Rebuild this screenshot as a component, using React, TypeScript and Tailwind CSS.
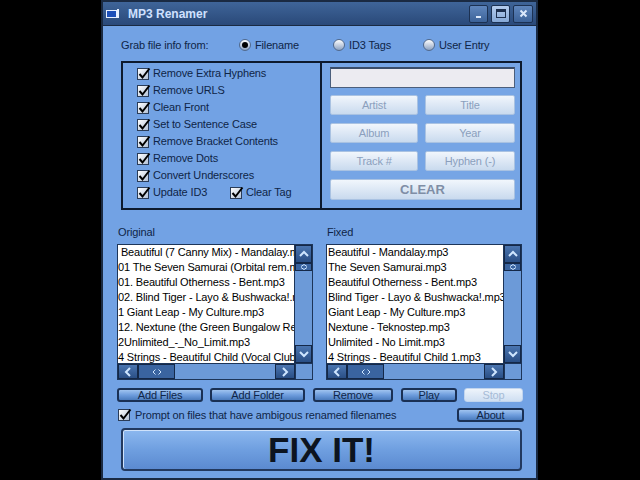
import React from "react";

const originals = [
  " Beautiful (7 Canny Mix) - Mandalay.mp3",
  "01 The Seven Samurai (Orbital rem.mp3",
  "01. Beautiful Otherness - Bent.mp3",
  "02. Blind Tiger - Layo & Bushwacka!.mp3",
  "1 Giant Leap - My Culture.mp3",
  "12. Nextune (the Green Bungalow Remix).mp3",
  "2Unlimited_-_No_Limit.mp3",
  "4 Strings - Beautiful Child (Vocal Club Mix).mp3",
];

const fixed = [
  "Beautiful - Mandalay.mp3",
  "The Seven Samurai.mp3",
  "Beautiful Otherness - Bent.mp3",
  "Blind Tiger - Layo & Bushwacka!.mp3",
  "Giant Leap - My Culture.mp3",
  "Nextune - Teknostep.mp3",
  "Unlimited - No Limit.mp3",
  "4 Strings - Beautiful Child 1.mp3",
];

const options = [
  "Remove Extra Hyphens",
  "Remove URLS",
  "Clean Front",
  "Set to Sentence Case",
  "Remove Bracket Contents",
  "Remove Dots",
  "Convert Underscores",
];

function Check() {
  return (
    <div className="relative w-[12px] h-[12px] shrink-0 border border-[#2a3c58] bg-gradient-to-br from-white to-[#b4c2d6]">
      <svg className="absolute -top-[2px] left-0" width="13" height="13" viewBox="0 0 13 13">
        <path d="M1.5 7 L4.5 10.5 L11.5 1.5" fill="none" stroke="#000" strokeWidth="2" />
      </svg>
    </div>
  );
}

function Radio({ on }: { on?: boolean }) {
  return (
    <div className="w-[12px] h-[12px] rounded-full shrink-0 border border-[#51698c] bg-gradient-to-b from-white to-[#8ea3c2] flex items-center justify-center">
      {on && <div className="w-[6px] h-[6px] rounded-full bg-black" />}
    </div>
  );
}

function Chevron({ dir }: { dir: "up" | "down" | "left" | "right" }) {
  const d = {
    up: "M2 8 L6 4 L10 8",
    down: "M2 4 L6 8 L10 4",
    left: "M8 2 L4 6 L8 10",
    right: "M4 2 L8 6 L4 10",
  }[dir];
  return (
    <svg width="12" height="12" viewBox="0 0 12 12">
      <path d={d} fill="none" stroke="#cfe6ff" strokeWidth="2" />
    </svg>
  );
}

function ScrollBtn({ dir, className }: { dir: "up" | "down" | "left" | "right"; className: string }) {
  return (
    <div
      className={`${className} shrink-0 bg-gradient-to-b from-[#4a75b0] to-[#2a4f86] border border-[#142848] flex items-center justify-center`}
    >
      <Chevron dir={dir} />
    </div>
  );
}

function FileList({ items, first }: { items: string[]; first?: boolean }) {
  return (
    <div className="w-[196px] h-[136px] flex flex-col border border-[#1d3559]">
      <div className="flex h-[118px]">
        <div className="flex-1 bg-white overflow-hidden">
          {items.map((t, i) => (
            <div
              key={i}
              className={`h-[15px] leading-[15px] text-[11px] text-black whitespace-pre overflow-hidden ${first ? "pl-[0px]" : "pl-[1px]"}`}
            >
              {t}
            </div>
          ))}
        </div>
        <div className="w-[18px] flex flex-col bg-[#6c9ad8] border-l border-[#1d3559]">
          <ScrollBtn dir="up" className="h-[18px]" />
          <div className="h-[8px] bg-[#3a64a0] border border-[#142848] flex items-center justify-center">
            <svg width="8" height="6" viewBox="0 0 8 6">
              <path d="M1 2.5 L4 0.5 L7 2.5 M1 3.5 L4 5.5 L7 3.5" fill="none" stroke="#cfe6ff" strokeWidth="1" />
            </svg>
          </div>
          <div className="flex-1" />
          <ScrollBtn dir="down" className="h-[18px]" />
        </div>
      </div>
      <div className="flex h-[17px] bg-[#6c9ad8] border-t border-[#1d3559]">
        <ScrollBtn dir="left" className="w-[20px]" />
        <div className="w-[37px] bg-[#3a64a0] border border-[#142848] flex items-center justify-center">
          <svg width="10" height="6" viewBox="0 0 10 6">
            <path d="M3.5 0.5 L1 3 L3.5 5.5 M6.5 0.5 L9 3 L6.5 5.5" fill="none" stroke="#cfe6ff" strokeWidth="1" />
          </svg>
        </div>
        <div className="flex-1" />
        <ScrollBtn dir="right" className="w-[20px]" />
        <div className="w-[17px] border-l border-[#1d3559]" />
      </div>
    </div>
  );
}

function TagBtn({ label, w }: { label: string; w: string }) {
  return (
    <div
      className={`${w} h-[20px] rounded-[2px] border border-[#a9c2e2] bg-gradient-to-b from-[#f1f6fc] to-[#c9daee] flex items-center justify-center text-[11px] text-[#8b9fbd]`}
    >
      {label}
    </div>
  );
}

function BlueBtn({ label, w, disabled }: { label: string; w: string; disabled?: boolean }) {
  return (
    <div
      className={`${w} h-[14px] rounded-[3px] flex items-center justify-center text-[11px] leading-none ${
        disabled
          ? "bg-gradient-to-b from-[#eef4fb] to-[#cfdff2] text-[#a6bbd6] border border-[#c2d5ee]"
          : "bg-gradient-to-b from-[#9fc3ef] via-[#6e9ddd] to-[#4a7bbd] text-[#0f2547] border-2 border-[#1a3054]"
      }`}
    >
      {label}
    </div>
  );
}

export default function App() {
  return (
    <div className="w-[640px] h-[480px] bg-black flex pl-[101px] font-['Liberation_Sans',Arial,sans-serif] tracking-[-0.15px]">
      <div className="w-[437px] h-[480px] flex flex-col border-2 border-[#1a2a42] bg-[#72a2e4]">
        {/* title bar */}
        <div className="h-[24px] shrink-0 flex items-center bg-gradient-to-b from-[#3f6599] to-[#2a4979] border-b border-[#1a2a42] pl-[3px] pr-[3px]">
          <svg width="14" height="12" viewBox="0 0 14 12" className="shrink-0">
            <rect x="0.5" y="2.5" width="10" height="7" fill="#1d4fb8" stroke="#e8f0ff" />
            <rect x="11" y="1" width="2" height="9" fill="#e8f0ff" />
          </svg>
          <div className="ml-[8px] text-[12px] font-bold text-[#cfe0ff] tracking-normal">MP3 Renamer</div>
          <div className="flex-1" />
          <div className="w-[19px] h-[18px] rounded-[2px] border border-[#1c3152] bg-gradient-to-b from-[#5f86bd] to-[#3c6298] flex items-end justify-center pb-[4px]">
            <div className="w-[5px] h-[2px] bg-[#dbe8fb]" />
          </div>
          <div className="ml-[3px] w-[19px] h-[18px] rounded-[2px] border border-[#1c3152] bg-gradient-to-b from-[#b5cced] to-[#86a8d6] flex items-center justify-center">
            <div className="w-[10px] h-[9px] border border-[#1d2f4e] border-t-[3px]" />
          </div>
          <div className="ml-[3px] w-[20px] h-[18px] rounded-[2px] border border-[#1c3152] bg-gradient-to-b from-[#5f86bd] to-[#3c6298] flex items-center justify-center">
            <svg width="9" height="9" viewBox="0 0 9 9">
              <path d="M1.5 1.5 L7.5 7.5 M7.5 1.5 L1.5 7.5" stroke="#dbe8fb" strokeWidth="2" />
            </svg>
          </div>
        </div>

        {/* body */}
        <div className="flex flex-col pl-[14px] text-[11px] text-[#0f2547]">
          <div className="mt-[12px] h-[14px] flex items-center">
            <div className="ml-[4px] w-[118px]">Grab file info from:</div>
            <div className="w-[94px] flex items-center gap-[4px]">
              <Radio on />
              <span>Filename</span>
            </div>
            <div className="w-[90px] flex items-center gap-[4px]">
              <Radio />
              <span>ID3 Tags</span>
            </div>
            <div className="flex items-center gap-[4px]">
              <Radio />
              <span>User Entry</span>
            </div>
          </div>

          <div className="mt-[9px] ml-[4px] w-[401px] h-[149px] flex border-2 border-[#0d1a2e]">
            <div className="w-[197px] flex flex-col pl-[14px] pt-[2px]">
              {options.map((o) => (
                <div key={o} className="h-[17px] flex items-center gap-[4px]">
                  <Check />
                  <span>{o}</span>
                </div>
              ))}
              <div className="h-[17px] flex items-center">
                <div className="w-[93px] flex items-center gap-[4px]">
                  <Check />
                  <span>Update ID3</span>
                </div>
                <div className="flex items-center gap-[4px]">
                  <Check />
                  <span>Clear Tag</span>
                </div>
              </div>
            </div>
            <div className="w-[2px] bg-[#0d1a2e]" />
            <div className="flex-1 flex flex-col pl-[8px] pt-[4px] bg-[#76a5e5]">
              <div className="w-[185px] h-[21px] bg-[#ecebf1] border border-[#4b5e7c] border-t-2 border-t-[#3a4c68]" />
              <div className="mt-[7px] flex gap-[7px]">
                <TagBtn label="Artist" w="w-[88px]" />
                <TagBtn label="Title" w="w-[90px]" />
              </div>
              <div className="mt-[8px] flex gap-[7px]">
                <TagBtn label="Album" w="w-[88px]" />
                <TagBtn label="Year" w="w-[90px]" />
              </div>
              <div className="mt-[8px] flex gap-[7px]">
                <TagBtn label="Track #" w="w-[88px]" />
                <TagBtn label="Hyphen (-)" w="w-[90px]" />
              </div>
              <div className="mt-[8px] w-[185px] h-[21px] rounded-[2px] border border-[#a9c2e2] bg-gradient-to-b from-[#f1f6fc] to-[#c9daee] flex items-center justify-center text-[13px] font-bold text-[#7f8ea6] tracking-normal">
                CLEAR
              </div>
            </div>
          </div>

          <div className="mt-[15px] h-[14px] flex items-center">
            <div className="ml-[1px] w-[209px]">Original</div>
            <div>Fixed</div>
          </div>

          <div className="mt-[5px] flex gap-[13px]">
            <FileList items={originals} first />
            <FileList items={fixed} />
          </div>

          <div className="mt-[8px] flex">
            <BlueBtn label="Add Files" w="w-[86px]" />
            <div className="w-[7px]" />
            <BlueBtn label="Add Folder" w="w-[95px]" />
            <div className="w-[8px]" />
            <BlueBtn label="Remove" w="w-[80px]" />
            <div className="w-[8px]" />
            <BlueBtn label="Play" w="w-[56px]" />
            <div className="w-[7px]" />
            <BlueBtn label="Stop" w="w-[59px]" disabled />
          </div>

          <div className="mt-[6px] h-[14px] flex items-center">
            <div className="ml-[1px] flex items-center gap-[5px]">
              <Check />
              <span>Prompt on files that have ambigous renamed filenames</span>
            </div>
            <div className="flex-1" />
            <div className="mr-[12px]">
              <BlueBtn label="About" w="w-[67px]" />
            </div>
          </div>

          <div className="mt-[6px] ml-[4px] w-[401px] h-[43px] rounded-[4px] border-2 border-[#22395f] bg-gradient-to-b from-[#8cb8ef] via-[#6f9fe0] to-[#5b8ad0] shadow-[inset_0_1px_0_#cfe2fb,inset_1px_0_0_#cfe2fb] flex items-center justify-center">
            <span className="text-[35px] font-bold text-[#0c1420] leading-none tracking-normal">FIX IT!</span>
          </div>
        </div>
      </div>
    </div>
  );
}
